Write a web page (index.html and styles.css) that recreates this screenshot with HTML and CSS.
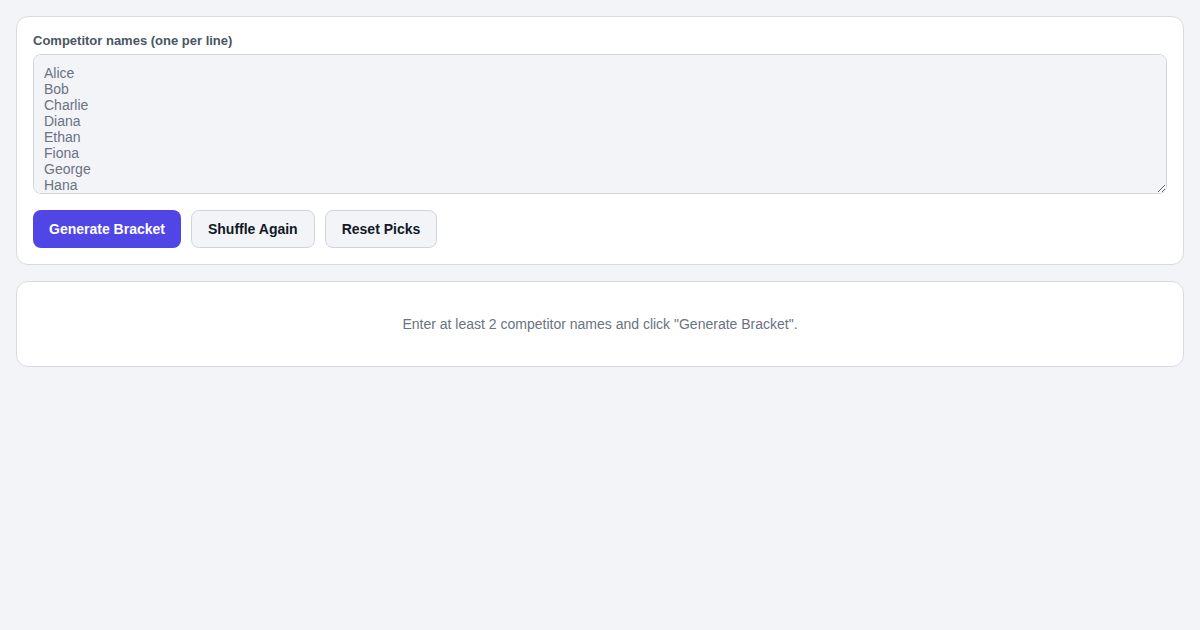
FILE: index.html
```html
<!DOCTYPE html>
<html>
<head>
<meta charset="utf-8">
<link rel="stylesheet" href="styles.css">
</head>
<body>
<div class="page">
  <section class="card">
    <label class="label" for="names">Competitor names (one per line)</label>
    <textarea id="names" class="names">Alice
Bob
Charlie
Diana
Ethan
Fiona
George
Hana</textarea>
    <div class="actions">
      <button class="btn primary">Generate Bracket</button>
      <button class="btn secondary">Shuffle Again</button>
      <button class="btn secondary">Reset Picks</button>
    </div>
  </section>
  <section class="card empty">
    <p class="hint">Enter at least 2 competitor names and click "Generate Bracket".</p>
  </section>
</div>
</body>
</html>
```
FILE: styles.css
```css
html, body {
  margin: 0;
  padding: 0;
  background: #f3f4f8;
  font-family: "Liberation Sans", Arial, sans-serif;
}
.page {
  padding: 16px;
  display: flex;
  flex-direction: column;
  gap: 16px;
}
.card {
  background: #ffffff;
  border: 1px solid #d8dbe0;
  border-radius: 12px;
  padding: 16px;
  display: flex;
  flex-direction: column;
}
.label {
  font-size: 13px;
  line-height: 15px;
  font-weight: bold;
  color: #4b5563;
  margin-bottom: 6px;
}
.names {
  height: 140px;
  box-sizing: border-box;
  background: #f3f4f8;
  border: 1px solid #d1d5db;
  border-radius: 8px;
  padding: 10px;
  font-family: "Liberation Sans", Arial, sans-serif;
  font-size: 14px;
  line-height: 16px;
  color: #6b7280;
  resize: vertical;
  margin: 0;
  outline: none;
}
.actions {
  display: flex;
  gap: 10px;
  margin-top: 16px;
}
.btn {
  height: 38px;
  padding: 0 16px;
  border-radius: 8px;
  font-family: "Liberation Sans", Arial, sans-serif;
  font-size: 14px;
  font-weight: bold;
  cursor: pointer;
}
.primary {
  background: #4f46e5;
  color: #ffffff;
  border: none;
}
.secondary {
  background: #f3f4f8;
  color: #111827;
  border: 1px solid #d1d5db;
}
.empty {
  padding: 32px 16px;
  align-items: center;
}
.hint {
  margin: 0;
  font-size: 14px;
  line-height: 20px;
  color: #6b7280;
}
```
